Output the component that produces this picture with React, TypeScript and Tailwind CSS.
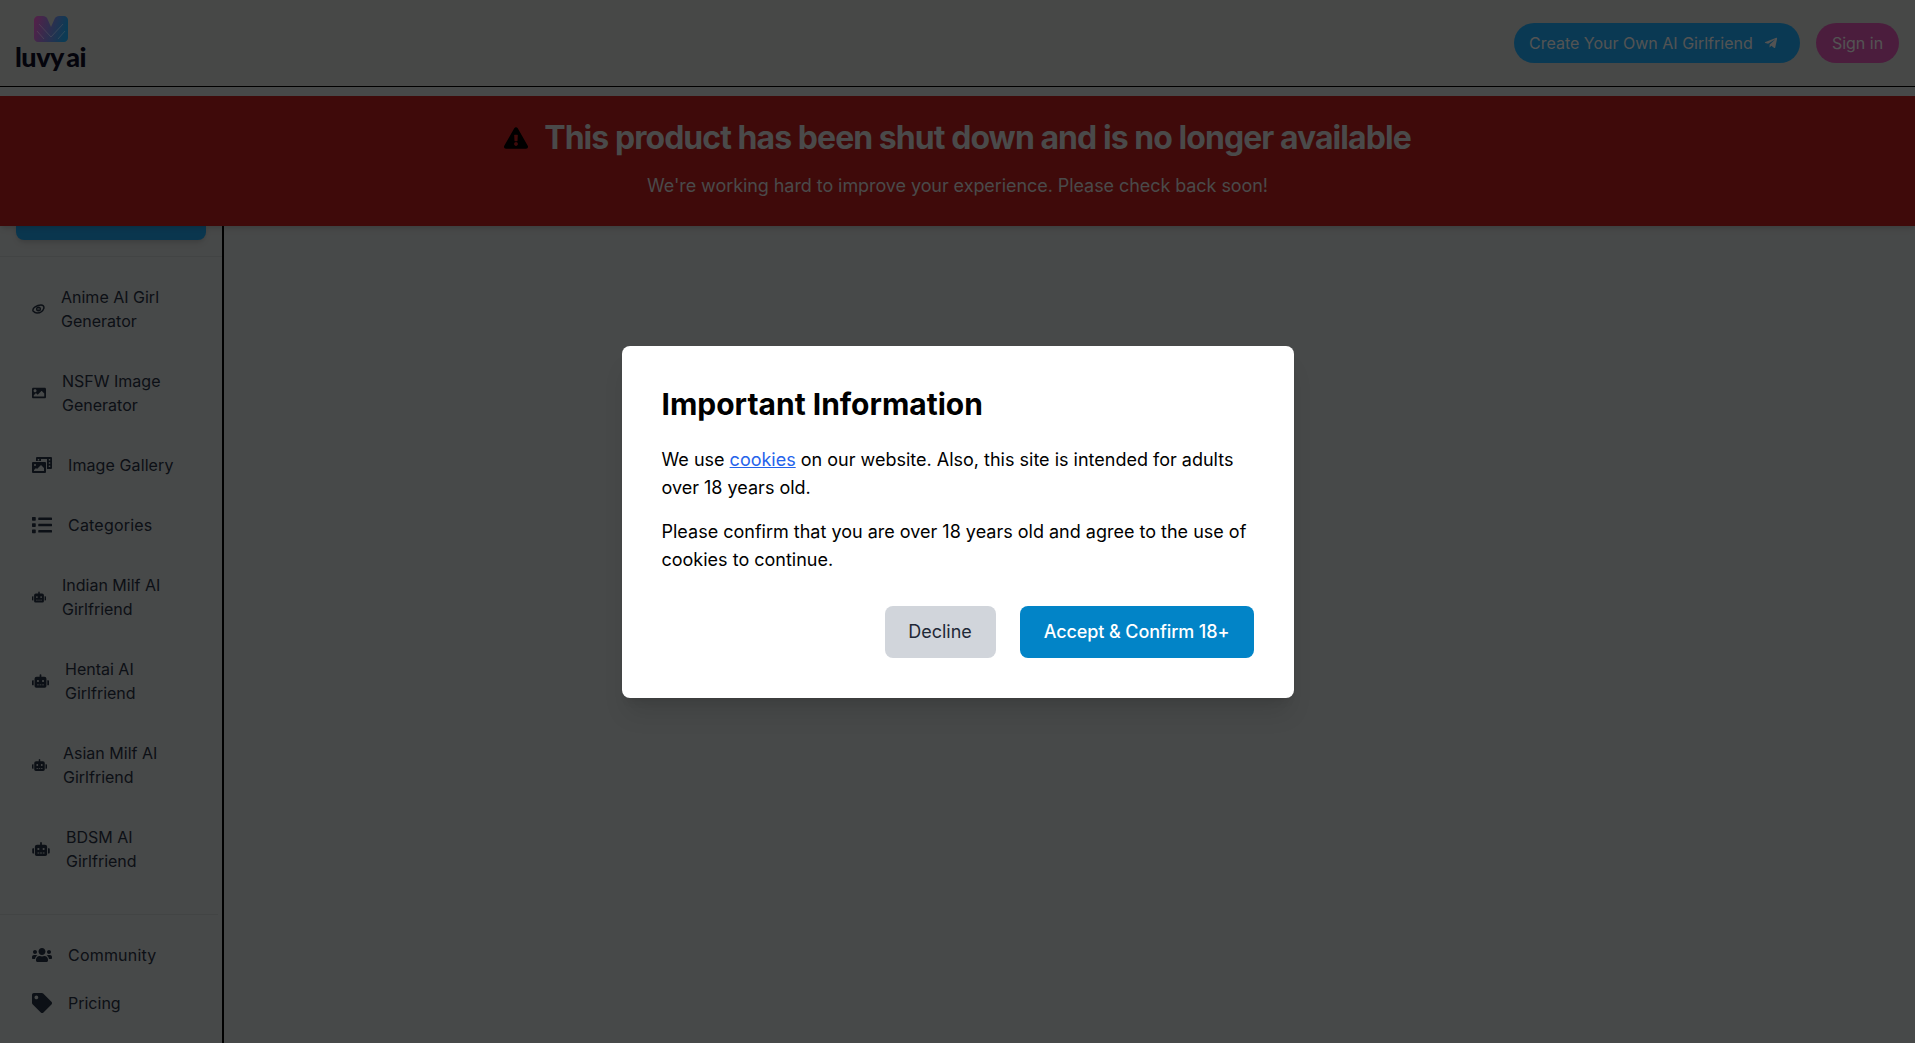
import { FaExclamationTriangle, FaImage, FaList, FaPhotoVideo, FaRobot, FaTag, FaTelegramPlane, FaUsers } from 'react-icons/fa';
import type { ComponentType, ReactNode } from 'react';

function LuvyLogo() {
  return (
    <div className="flex flex-col items-center">
      <svg width="34" height="26" viewBox="0 0 34 26">
        <defs>
          <linearGradient id="luvy" x1="0" y1="0" x2="1" y2="0.2">
            <stop offset="0" stopColor="#d850b4" />
            <stop offset="1" stopColor="#1f94d4" />
          </linearGradient>
        </defs>
        <path
          d="M4 0h5c2 0 3 1 4 2l4 9 4-9c1-1 2-2 4-2h5c2 0 4 2 4 4v18c0 2-2 4-4 4H4c-2 0-4-2-4-4V4c0-2 2-4 4-4z"
          fill="url(#luvy)"
        />
        <path d="M5 8l12 13L29 8M3 15l7 8M31 15l-7 8" stroke="#ffffff" strokeOpacity="0.35" strokeWidth="1" fill="none" />
      </svg>
      <span className="mt-0.5 text-[27px] leading-[26px] font-black tracking-[-0.5px] text-[#0b0b20] [word-spacing:-3px] [font-family:Lato,sans-serif]">
        luvy ai
      </span>
    </div>
  );
}

function AnimeEye({ className }: { className?: string }) {
  return (
    <svg viewBox="0 0 13 12" className={className} fill="none" stroke="currentColor" strokeWidth="1.4">
      <path d="M1 8c-1-3 4-6 8-6 2 0 3 1 3 3-1 3-4 5-7 5-2 0-3-1-4-2z" />
      <circle cx="6.5" cy="6" r="1.8" />
      <circle cx="6.5" cy="6" r="0.6" fill="currentColor" stroke="none" />
    </svg>
  );
}

interface NavRowProps {
  icon: ComponentType<{ className?: string }>;
  iconClass: string;
  textClass?: string;
  children: ReactNode;
}

function NavRow({ icon: Icon, iconClass, textClass = '', children }: NavRowProps) {
  return (
    <a className="flex items-center gap-4 px-8 py-3 text-base leading-6 text-[#1f2937]">
      <Icon className={`shrink-0 ${iconClass}`} />
      <span className={textClass}>{children}</span>
    </a>
  );
}

export default function App() {
  return (
    <div className="relative h-[1043px] overflow-hidden bg-[#b2b6b6] [font-family:Inter,sans-serif]">
      <header className="flex h-[87px] items-center justify-between border-b border-black bg-[#b2b4b2] pr-4 pl-[15px]">
        <LuvyLogo />
        <div className="flex items-center gap-4">
          <button className="flex h-10 w-[286px] items-center gap-[11px] rounded-full bg-[#1a90d0] pl-[15px] text-base text-[#d0d0d0]">
            Create Your Own AI Girlfriend
            <FaTelegramPlane className="text-sm" />
          </button>
          <button className="h-10 w-[83px] rounded-full bg-[#bb4a9a] text-base text-[#d0d0d0]">Sign in</button>
        </div>
      </header>

      <div className="flex h-[956px]">
        <aside className="mt-[9px] flex w-[224px] shrink-0 flex-col border-r-2 border-black">
          <div className="border-b border-[#a6aaaa] px-4 pt-[124px] pb-4">
            <div className="h-5 rounded-b-lg bg-[#1a88c4] shadow-md" />
          </div>
          <nav className="flex flex-1 flex-col gap-3 pt-4">
            <NavRow icon={AnimeEye} iconClass="h-3 w-[13px]">
              Anime AI Girl
              <br />
              Generator
            </NavRow>
            <NavRow icon={FaImage} iconClass="h-[14px] w-[14px]">
              NSFW Image
              <br />
              Generator
            </NavRow>
            <NavRow icon={FaPhotoVideo} iconClass="h-4 w-5" textClass="tracking-[0.1px]">
              Image Gallery
            </NavRow>
            <NavRow icon={FaList} iconClass="h-5 w-5" textClass="tracking-[0.2px]">
              Categories
            </NavRow>
            <NavRow icon={FaRobot} iconClass="h-3 w-[14px]">
              Indian Milf AI
              <br />
              Girlfriend
            </NavRow>
            <NavRow icon={FaRobot} iconClass="h-[14px] w-[17px]">
              Hentai AI
              <br />
              Girlfriend
            </NavRow>
            <NavRow icon={FaRobot} iconClass="h-3 w-[15px]">
              Asian Milf AI
              <br />
              Girlfriend
            </NavRow>
            <NavRow icon={FaRobot} iconClass="h-[14px] w-[18px]">
              BDSM AI
              <br />
              Girlfriend
            </NavRow>
          </nav>
          <div className="mr-1 flex flex-col border-t border-[#a6aaaa] pt-4 pb-[16px]">
            <NavRow icon={FaUsers} iconClass="h-4 w-5" textClass="tracking-[0.2px]">
              Community
            </NavRow>
            <NavRow icon={FaTag} iconClass="h-5 w-5">
              Pricing
            </NavRow>
          </div>
        </aside>
        <main className="flex-1" />
      </div>

      <div className="absolute inset-x-0 top-[96px] flex h-[130px] flex-col items-center bg-[#9e1a1a] pt-6 text-[#b8b8b8] shadow-md">
        <div className="flex items-center gap-4">
          <FaExclamationTriangle className="h-[22px] w-6 text-black" />
          <h2 className="text-[32px] leading-9 font-bold tracking-[-0.95px]">This product has been shut down and is no longer available</h2>
        </div>
        <p className="mt-4 text-lg leading-7 tracking-[-0.07px]">We're working hard to improve your experience. Please check back soon!</p>
      </div>

      <div className="absolute inset-0 flex items-center justify-center bg-black/60">
        <div className="w-[672px] rounded-lg bg-white p-10 shadow-xl">
          <h2 className="mb-6 text-[30px] leading-9 font-bold text-black">Important Information</h2>
          <p className="mb-4 text-lg leading-7 text-black">
            We use <a className="text-[#2563eb] underline">cookies</a> on our website. Also, this site is intended for adults over 18 years old.
          </p>
          <p className="mb-8 text-lg leading-7 text-black">
            Please confirm that you are over 18 years old and agree to the use of cookies to continue.
          </p>
          <div className="flex justify-end gap-6">
            <button className="h-[52px] w-[111px] rounded-lg bg-[#d1d5db] text-lg text-[#1f2937]">Decline</button>
            <button className="h-[52px] w-[234px] rounded-lg bg-[#0284c7] text-lg font-medium tracking-[-0.1px] text-white">
              Accept &amp; Confirm 18+
            </button>
          </div>
        </div>
      </div>
    </div>
  );
}
